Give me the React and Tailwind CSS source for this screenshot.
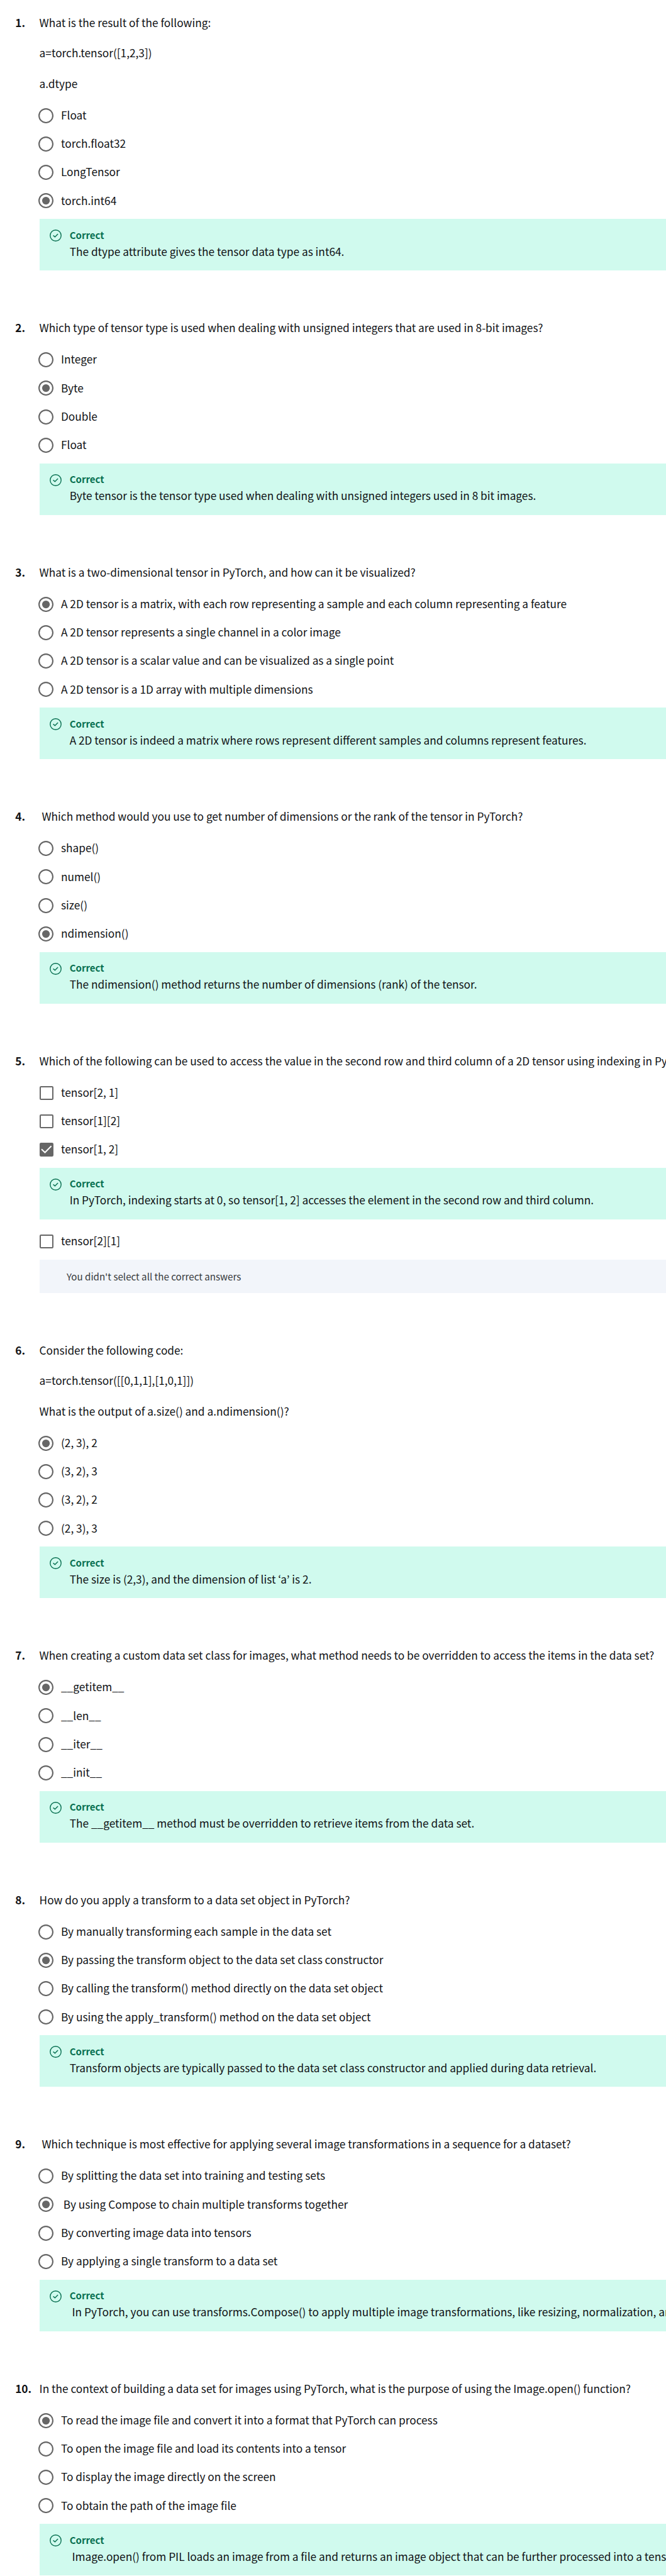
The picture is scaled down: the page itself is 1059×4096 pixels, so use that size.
const QUESTIONS = [
  {
    text: ["What is the result of the following:", "a=torch.tensor([1,2,3])", "a.dtype"],
    options: ["Float", "torch.float32", "LongTensor", "torch.int64"],
    selected: 3,
    feedback: "The dtype attribute gives the tensor data type as int64.",
  },
  {
    text: ["Which type of tensor type is used when dealing with unsigned integers that are used in 8-bit images?"],
    options: ["Integer", "Byte", "Double", "Float"],
    selected: 1,
    feedback: "Byte tensor is the tensor type used when dealing with unsigned integers used in 8 bit images.",
  },
  {
    text: ["What is a two-dimensional tensor in PyTorch, and how can it be visualized?"],
    options: [
      "A 2D tensor is a matrix, with each row representing a sample and each column representing a feature",
      "A 2D tensor represents a single channel in a color image",
      "A 2D tensor is a scalar value and can be visualized as a single point",
      "A 2D tensor is a 1D array with multiple dimensions",
    ],
    selected: 0,
    feedback: "A 2D tensor is indeed a matrix where rows represent different samples and columns represent features.",
  },
  {
    text: ["\u00a0Which method would you use to get number of dimensions or the rank of the tensor in PyTorch?"],
    options: ["shape()", "numel()", "size()", "ndimension()"],
    selected: 3,
    feedback: "The ndimension() method returns the number of dimensions (rank) of the tensor.",
  },
  {
    text: ["Which of the following can be used to access the value in the second row and third column of a 2D tensor using indexing in PyTorch?"],
    multiple: true,
    options: ["tensor[2, 1]", "tensor[1][2]", "tensor[1, 2]", "tensor[2][1]"],
    selected: 2,
    feedback: "In PyTorch, indexing starts at 0, so tensor[1, 2] accesses the element in the second row and third column.",
    notice: "You didn't select all the correct answers",
  },
  {
    text: ["Consider the following code:", "a=torch.tensor([[0,1,1],[1,0,1]])", "What is the output of a.size() and a.ndimension()?"],
    options: ["(2, 3), 2", "(3, 2), 3", "(3, 2), 2", "(2, 3), 3"],
    selected: 0,
    feedback: "The size is (2,3), and the dimension of list ‘a’ is 2.",
  },
  {
    text: ["When creating a custom data set class for images, what method needs to be overridden to access the items in the data set?"],
    options: ["__getitem__", "__len__", "__iter__", "__init__"],
    selected: 0,
    feedback: "The __getitem__ method must be overridden to retrieve items from the data set.",
  },
  {
    text: ["How do you apply a transform to a data set object in PyTorch?"],
    options: [
      "By manually transforming each sample in the data set",
      "By passing the transform object to the data set class constructor",
      "By calling the transform() method directly on the data set object",
      "By using the apply_transform() method on the data set object",
    ],
    selected: 1,
    feedback: "Transform objects are typically passed to the data set class constructor and applied during data retrieval.",
  },
  {
    text: ["\u00a0Which technique is most effective for applying several image transformations in a sequence for a dataset?"],
    options: [
      "By splitting the data set into training and testing sets",
      "\u00a0By using Compose to chain multiple transforms together",
      "By converting image data into tensors",
      "By applying a single transform to a data set",
    ],
    selected: 1,
    feedback: "\u00a0In PyTorch, you can use transforms.Compose() to apply multiple image transformations, like resizing, normalization, and",
  },
  {
    text: ["In the context of building a data set for images using PyTorch, what is the purpose of using the Image.open() function?"],
    options: [
      "To read the image file and convert it into a format that PyTorch can process",
      "To open the image file and load its contents into a tensor",
      "To display the image directly on the screen",
      "To obtain the path of the image file",
    ],
    selected: 0,
    feedback: "\u00a0Image.open() from PIL loads an image from a file and returns an image object that can be further processed into a tensor.",
  },
];

function Radio({ on }) {
  return (
    <span className="-ml-[1.3px] flex size-[24.1px] shrink-0 items-center justify-center">
      <svg viewBox="0 0 24 24" className="size-full">
        <circle cx="12" cy="12" r="10.9" fill="none" stroke="#666" strokeWidth="2.1" />
        {on && <circle cx="12" cy="12" r="6.1" fill="#666" />}
      </svg>
    </span>
  );
}

function Checkbox({ on }) {
  return (
    <svg viewBox="0 0 22 22" className="size-[22px] shrink-0">
      <rect x="1" y="1" width="20" height="20" rx="1.2" fill={on ? "#666" : "#fff"} stroke="#666" strokeWidth="2" />
      {on && <path d="M3 10.2 L8.5 15.5 L18.6 5.3" fill="none" stroke="#fff" strokeWidth="2" />}
    </svg>
  );
}

function Option({ label, on, multiple }) {
  return (
    <label className={multiple ? "flex h-[45px] items-center" : "flex h-[45.25px] items-center"}>
      <span className="flex w-[34.4px] shrink-0">{multiple ? <Checkbox on={on} /> : <Radio on={on} />}</span>
      <span className="pb-[1.6px]">{label}</span>
    </label>
  );
}

function Correct({ children }) {
  return (
    <div className="flex h-[81.8px] bg-[#d0faee] pl-[16.2px] pt-[16.4px]">
      <svg viewBox="0 0 19 19" fill="none" stroke="#087051" className="mt-[0.5px] size-[19px] shrink-0">
        <circle cx="9.5" cy="9.5" r="8.7" strokeWidth="1.4" />
        <path d="M5.6 9.4 L8.4 11.8 L13.1 6.9" strokeWidth="1.4" />
      </svg>
      <div className="ml-[12.9px]">
        <div className="text-[15px] font-bold leading-[18px] text-[#087051]">Correct</div>
        <div className="mt-[5.2px] leading-6">{children}</div>
      </div>
    </div>
  );
}

function Question({ number, q }) {
  return (
    <section className="flex">
      <div className="w-[38.4px] shrink-0 font-bold leading-6">{number}.</div>
      <div className="min-w-0 flex-1">
        <div className="flex flex-col gap-[24.4px] leading-6">
          {q.text.map((line) => (
            <p key={line}>{line}</p>
          ))}
        </div>
        <div className="mt-[16.3px]">
          {q.options.map((label, i) => (
            <div key={label}>
              <Option label={label} on={i === q.selected} multiple={q.multiple} />
              {q.multiple && i === q.selected && (
                <div className="mb-[12.9px] mt-[6.8px]">
                  <Correct>{q.feedback}</Correct>
                </div>
              )}
            </div>
          ))}
        </div>
        <div className="mt-[6.3px]">
          {q.notice ? (
            <div className="flex h-[53.1px] items-center bg-[#f2f5fa] pl-[43.4px] text-[15.12px] text-[#373a3c]">
              <span className="pb-[1px] leading-[22px]">{q.notice}</span>
            </div>
          ) : (
            <Correct>{q.feedback}</Correct>
          )}
        </div>
      </div>
    </section>
  );
}

export default function App() {
  return (
    <main className="flex h-[4096px] w-full flex-col gap-[79.1px] overflow-hidden whitespace-nowrap bg-white pl-[24.2px] pt-[24px] font-['Noto_Sans_CJK_KR','Noto_Sans',sans-serif] text-[17.28px] text-[#0f1114]">
      {QUESTIONS.map((q, i) => (
        <Question key={i} number={i + 1} q={q} />
      ))}
    </main>
  );
}
